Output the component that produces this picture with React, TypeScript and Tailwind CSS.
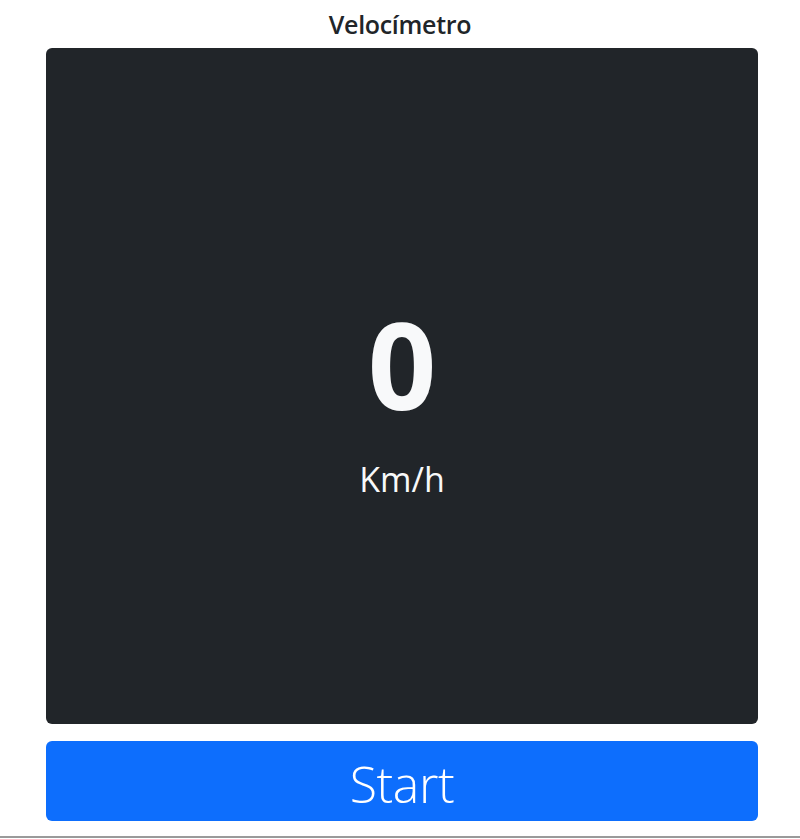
import { useState } from 'react';

export default function App() {
  const [speed] = useState(0);

  return (
    <div className="h-[839px] bg-white flex flex-col" style={{ fontFamily: '"Open Sans", "Noto Sans", sans-serif' }}>
      <div className="h-[48px] flex items-center justify-center pt-[2px]">
        <h1 className="text-[25px] font-semibold text-[#212529] tracking-[-0.3px]">Velocímetro</h1>
      </div>

      <div className="ml-[46px] mr-[42px] flex flex-col gap-[17px]">
        <div className="h-[676px] bg-[#212529] rounded-md flex flex-col items-center justify-center text-[#f8f9fa] pt-[28px]">
          <span className="text-[120px] font-bold leading-none">{speed}</span>
          <span className="text-[34px] mt-[38px] leading-none">Km/h</span>
        </div>

        <button className="h-[80px] w-full bg-[#0d6efd] rounded-md text-white text-[50px] font-light leading-none tracking-[-0.4px] pt-[6px]">
          Start
        </button>
      </div>

      <div className="flex-1" />
      <div className="h-[2px] mb-[1px] bg-[#9a9a9a]" />
    </div>
  );
}
